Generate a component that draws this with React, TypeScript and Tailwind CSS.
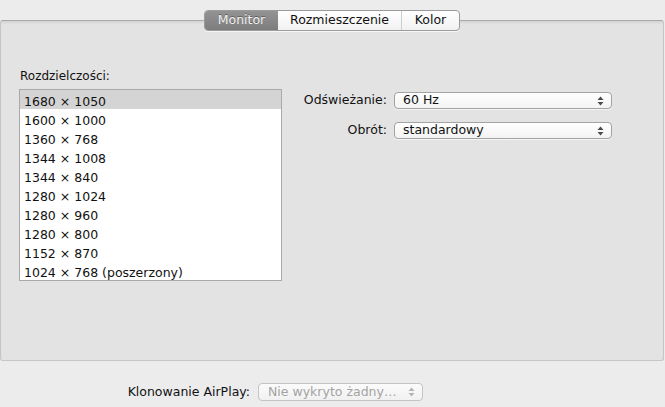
const resolutions = [
    '1680 × 1050',
    '1600 × 1000',
    '1360 × 768',
    '1344 × 1008',
    '1344 × 840',
    '1280 × 1024',
    '1280 × 960',
    '1280 × 800',
    '1152 × 870',
    '1024 × 768 (poszerzony)',
];

function Arrows({ disabled }: { disabled?: boolean }) {
    const fill = disabled ? '#b4b4b4' : '#4a4a4a';
    return (
        <svg width="7" height="10" viewBox="0 0 7 10" className="shrink-0">
            <path d="M3.5 0.5 L6.5 4 L0.5 4 Z" fill={fill} />
            <path d="M3.5 9.5 L6.5 6 L0.5 6 Z" fill={fill} />
        </svg>
    );
}

function PopUp({ value, width, disabled }: { value: string; width: string; disabled?: boolean }) {
    return (
        <div
            className={
                disabled
                    ? 'flex items-center justify-between h-[18px] rounded-[4px] border border-[#c4c4c4] bg-gradient-to-b from-[#fbfbfb] to-[#f1f1f1] pl-[9px] pr-[7px] text-[12.5px] leading-none whitespace-nowrap text-[#a3a3a3] ' + width
                    : 'flex items-center justify-between h-[17px] rounded-[4px] border border-[#a3a3a3] bg-gradient-to-b from-white to-[#f3f3f3] pl-[8px] pr-[7px] text-[12.5px] leading-none whitespace-nowrap text-[#111] shadow-[0_1px_0_rgba(255,255,255,0.6)] ' + width
            }
        >
            <span>{value}</span>
            <Arrows disabled={disabled} />
        </div>
    );
}

export default function App() {
    return (
        <div className="w-[665px] h-[407px] overflow-hidden bg-[#ececec] font-['DejaVu_Sans',sans-serif] text-[#111]">
            <div className="h-[20px]" />
            {/* Tab panel */}
            <div className="w-[664px] h-[341px] rounded-[3px] border border-[#c6c6c6] border-t-[#a9a9a9] bg-[#e3e3e3] shadow-[inset_0_2px_2px_rgba(0,0,0,0.06)]">
                <div className="flex justify-center -mt-[11px]">
                    <div className="flex h-[21px] rounded-[4px] border border-[#9b9b9b] bg-gradient-to-b from-white to-[#f1f1f1] text-[12.5px] leading-none overflow-hidden shadow-[0_1px_0_rgba(255,255,255,0.7)]">
                        <div className="flex items-center justify-center w-[73px] bg-gradient-to-b from-[#939393] to-[#7d7d7d] text-[#f2f2f2] [text-shadow:0_-1px_0_rgba(0,0,0,0.35)]">
                            Monitor
                        </div>
                        <div className="flex items-center justify-center w-[124px] border-r border-[#cdcdcd] text-[#111]">
                            Rozmieszczenie
                        </div>
                        <div className="flex items-center justify-center w-[57px] text-[#111]">Kolor</div>
                    </div>
                </div>

                <div className="flex items-start mt-[38px] pl-[18px]">
                    {/* Resolutions */}
                    <div className="flex flex-col">
                        <div className="text-[12px] leading-[15px] pl-px">Rozdzielczości:</div>
                        <div className="mt-[5px] w-[263px] border border-[#a9a9a9] bg-white">
                            {resolutions.map((r, i) => (
                                <div
                                    key={r}
                                    className={
                                        i === 0
                                            ? 'h-[19px] pt-[5px] pl-[4px] text-[12.5px] leading-[14px] bg-[#d4d4d4]'
                                            : 'h-[19px] pt-[5px] pl-[4px] text-[12.5px] leading-[14px]'
                                    }
                                >
                                    {r}
                                </div>
                            ))}
                        </div>
                    </div>

                    {/* Refresh / rotation */}
                    <div className="flex flex-col gap-[13px] pt-[23px]">
                        <div className="flex items-center">
                            <div className="w-[105px] text-right text-[12.5px] leading-none">Odświeżanie:</div>
                            <div className="ml-[7px]">
                                <PopUp value="60 Hz" width="w-[218px]" />
                            </div>
                        </div>
                        <div className="flex items-center">
                            <div className="w-[105px] text-right text-[12.5px] leading-none">Obrót:</div>
                            <div className="ml-[7px]">
                                <PopUp value="standardowy" width="w-[218px]" />
                            </div>
                        </div>
                    </div>
                </div>
            </div>

            {/* AirPlay */}
            <div className="flex items-center mt-[22px]">
                <div className="w-[250px] text-right text-[12.5px] leading-none whitespace-nowrap">Klonowanie AirPlay:</div>
                <div className="ml-[8px]">
                    <PopUp value="Nie wykryto żadny…" width="w-[165px]" disabled />
                </div>
            </div>
        </div>
    );
}
